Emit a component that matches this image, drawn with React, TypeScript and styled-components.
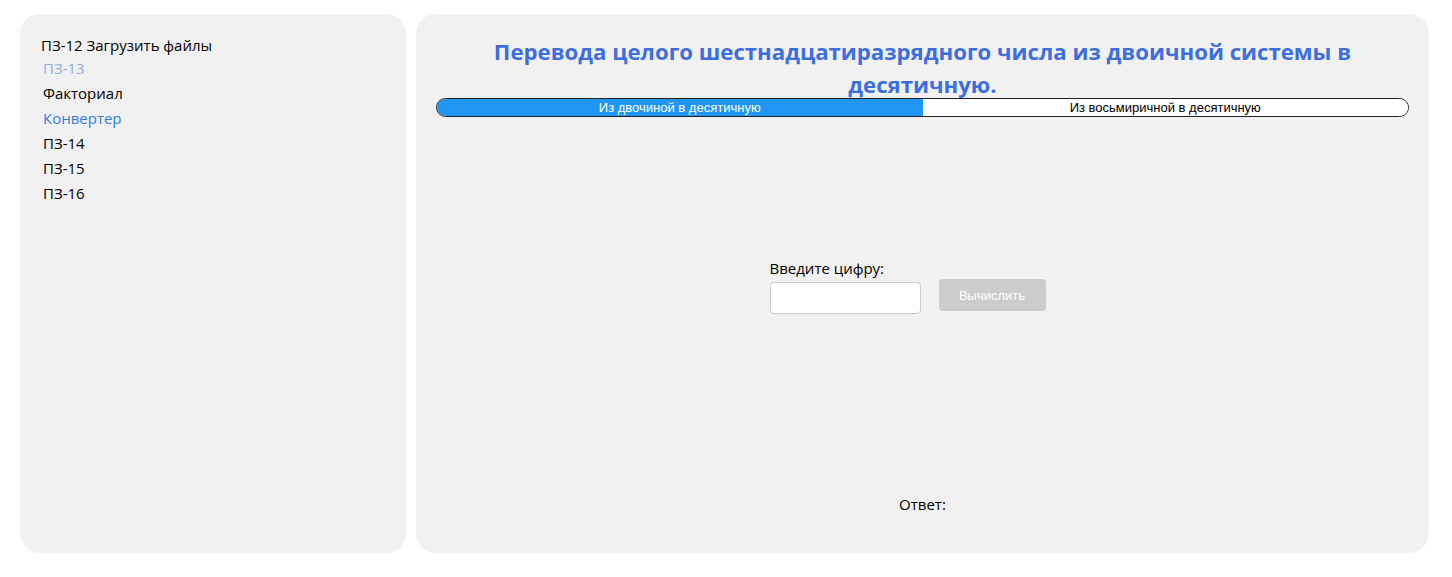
import React from "react"
import styled, { createGlobalStyle } from "styled-components"

const GlobalStyle = createGlobalStyle`
    html, body {
        margin: 0;
        background: #ffffff;
    }
    body {
        font-family: "Open Sans", "Noto Sans", sans-serif;
        color: #000;
    }
`

const Page = styled.div`
    display: flex;
    gap: 10px;
    height: 577px;
    box-sizing: border-box;
    padding: 14px 23px 24px 20px;
`

const Panel = styled.div`
    background: #f1f1f1;
    border-radius: 20px;
    box-sizing: border-box;
`

const Sidebar = styled(Panel)`
    width: 386px;
    flex-shrink: 0;
    padding: 19px 21px;
`

const NavList = styled.ul`
    list-style: none;
    margin: 0;
    padding: 0;
    display: flex;
    flex-direction: column;
`

const NavItem = styled.li<{ $tone?: "visited" | "link"; $first?: boolean }>`
    font-size: 15px;
    line-height: 25px;
    height: ${p => (p.$first ? "23px" : "25px")};
    padding-left: ${p => (p.$first ? "0" : "2px")};
    color: ${p => (p.$tone === "visited"
        ? "#8fb0e3"
        : p.$tone === "link" ? "#2f7de0" : "#000")};
    cursor: pointer;
`

const Main = styled(Panel)`
    flex: 1;
    display: flex;
    flex-direction: column;
    padding: 21px 20px 39px;
`

const Title = styled.h1`
    margin: 0 0 -3px;
    text-align: center;
    font-size: 22.2px;
    line-height: 33px;
    font-weight: 700;
    color: #3d6ee0;
    padding: 0 40px;
`

const Tabs = styled.div`
    display: flex;
    height: 19px;
    box-sizing: border-box;
    border: 1px solid #222;
    border-bottom-width: 1.5px;
    border-radius: 10px;
    overflow: hidden;
    background: #fff;
`

const Tab = styled.button<{ $active?: boolean }>`
    flex: 1;
    border: none;
    margin: 0;
    padding: 0;
    font-family: "Liberation Sans", Arial, sans-serif;
    font-size: 13px;
    line-height: 17px;
    background: ${p => (p.$active ? "#2196f3" : "#fff")};
    color: ${p => (p.$active ? "#fff" : "#000")};
    cursor: pointer;
`

const Form = styled.div`
    margin-top: 142px;
    align-self: center;
    display: flex;
    align-items: flex-end;
    gap: 18px;
    margin-right: 30px;
`

const Field = styled.label`
    display: flex;
    flex-direction: column;
    gap: 4px;
    font-size: 15px;
    line-height: 19px;
`

const Input = styled.input`
    width: 151px;
    height: 32px;
    box-sizing: border-box;
    border: 1px solid #cccccc;
    border-radius: 4px;
    background: #fff;
    outline: none;
`

const Button = styled.button`
    width: 107px;
    height: 32px;
    margin-bottom: 3px;
    border: none;
    border-radius: 4px;
    background: #cccccc;
    color: #fff;
    font-family: "Liberation Sans", Arial, sans-serif;
    font-size: 13px;
`

const Answer = styled.div`
    margin-top: auto;
    text-align: center;
    font-size: 15px;
    line-height: 20px;
`

const navItems = [
    { label: "ПЗ-12 Загрузить файлы", first: true },
    { label: "ПЗ-13", tone: "visited" as const },
    { label: "Факториал" },
    { label: "Конвертер", tone: "link" as const },
    { label: "ПЗ-14" },
    { label: "ПЗ-15" },
    { label: "ПЗ-16" },
]

export default function App() {
    return (
        <>
            <GlobalStyle />
            <Page>
                <Sidebar>
                    <NavList>
                        {navItems.map(item => (
                            <NavItem key={item.label} $tone={item.tone} $first={item.first}>
                                {item.label}
                            </NavItem>
                        ))}
                    </NavList>
                </Sidebar>
                <Main>
                    <Title>Перевода целого шестнадцатиразрядного числа из двоичной системы в десятичную.</Title>
                    <Tabs>
                        <Tab $active>Из двочиной в десятичную</Tab>
                        <Tab>Из восьмиричной в десятичную</Tab>
                    </Tabs>
                    <Form>
                        <Field>
                            Введите цифру:
                            <Input />
                        </Field>
                        <Button disabled>Вычислить</Button>
                    </Form>
                    <Answer>Ответ:</Answer>
                </Main>
            </Page>
        </>
    )
}
